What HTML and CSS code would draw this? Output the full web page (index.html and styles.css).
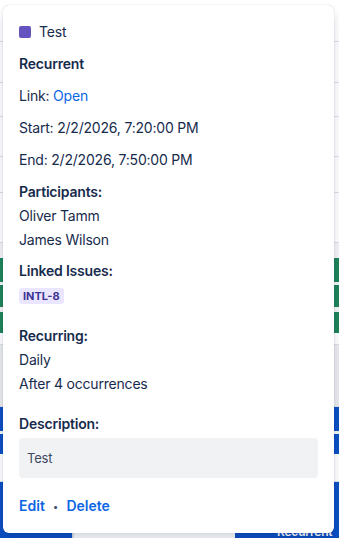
FILE: index.html
```html
<!DOCTYPE html>
<html lang="en">
<head>
  <meta charset="UTF-8">
  <meta name="viewport" content="width=device-width, initial-scale=1.0">
  <title>Event details</title>
  <link rel="stylesheet" href="styles.css">
</head>
<body>
  <div class="calendar">
    <div class="cal-row" style="height: 42px"></div>
    <div class="cal-row" style="height: 41px"></div>
    <div class="cal-row" style="height: 34px"></div>
    <div class="cal-row" style="height: 40px"></div>
    <div class="cal-row" style="height: 36px"></div>
    <div class="cal-row" style="height: 50px"></div>
    <div class="cal-gap" style="height: 15px"></div>
    <div class="cal-event green" style="height: 24px"></div>
    <div class="cal-gap" style="height: 3px"></div>
    <div class="cal-event green" style="height: 22px"></div>
    <div class="cal-gap" style="height: 5px"></div>
    <div class="cal-event green" style="height: 21px"></div>
    <div class="cal-row" style="height: 12px"></div>
    <div class="cal-row grey" style="height: 62px"></div>
    <div class="cal-event blue" style="height: 24px"></div>
    <div class="cal-gap" style="height: 3px"></div>
    <div class="cal-event blue" style="height: 20px"></div>
    <div class="cal-row" style="height: 28px"></div>
    <div class="cal-bottom">
      <div class="cal-cell blue"></div>
      <div class="cal-cell plain"></div>
      <div class="cal-cell blue wide">Recurrent</div>
    </div>
  </div>

  <div class="popup">
    <div class="row title">
      <span class="swatch"></span>
      <span>Test</span>
    </div>
    <div class="row strong">Recurrent</div>
    <div class="row">Link: <a href="#" class="link">Open</a></div>
    <div class="row">Start: 2/2/2026, 7:20:00 PM</div>
    <div class="row">End: 2/2/2026, 7:50:00 PM</div>

    <div class="section participants">
      <div class="label">Participants:</div>
      <div class="item">Oliver Tamm</div>
      <div class="item">James Wilson</div>
    </div>

    <div class="section linked">
      <div class="label">Linked Issues:</div>
      <div class="badges"><span class="badge">INTL-8</span></div>
    </div>

    <div class="section recurring">
      <div class="label">Recurring:</div>
      <div class="item">Daily</div>
      <div class="item">After 4 occurrences</div>
    </div>

    <div class="section description">
      <div class="label">Description:</div>
      <div class="desc-box">Test</div>
    </div>

    <div class="actions">
      <a href="#" class="link">Edit</a>
      <span class="dot">•</span>
      <a href="#" class="link">Delete</a>
    </div>
  </div>
</body>
</html>
```

FILE: styles.css
```css
body {
  margin: 0;
  width: 339px;
  height: 538px;
  overflow: hidden;
  position: relative;
  font-family: Inter, "Noto Sans", sans-serif;
  font-size: 14px;
  letter-spacing: -0.2px;
  color: #172b4d;
  background: #fff;
}

/* calendar behind the popup */
.calendar {
  display: flex;
  flex-direction: column;
  height: 538px;
}

.cal-row {
  border-bottom: 1px solid #dcdfe4;
  box-sizing: border-box;
  background: #fff;
}

.cal-row.grey {
  background: #ebecf0;
}

.cal-gap {
  background: #f4f5f7;
}

.cal-event.green {
  background: #1f845a;
}

.cal-event.blue {
  background: #0c4fc4;
}

.cal-bottom {
  flex: 1;
  display: flex;
  overflow: hidden;
}

.cal-cell {
  flex-shrink: 0;
}

.cal-cell.blue {
  background: #0c4fc4;
  width: 72px;
}

.cal-cell.plain {
  width: 161px;
  background: #fff;
  border-left: 2px solid #dcdfe4;
}

.cal-cell.wide {
  flex: 1;
  width: auto;
  min-width: 0;
  color: #fff;
  font-size: 12px;
  line-height: 12px;
  font-weight: 600;
  padding: 44px 0 0 42px;
  white-space: nowrap;
}

/* event popup */
.popup {
  position: absolute;
  top: 5px;
  left: 3px;
  width: 331px;
  height: 528px;
  box-sizing: border-box;
  padding: 17px 16px 16px;
  background: #fff;
  border-radius: 6px;
  box-shadow: 0 8px 12px rgba(9, 30, 66, 0.15), 0 0 1px rgba(9, 30, 66, 0.31);
  display: flex;
  flex-direction: column;
}

.row {
  line-height: 20px;
  margin-bottom: 12px;
}

.row:nth-child(5) {
  margin-bottom: 0;
}

.title {
  display: flex;
  align-items: center;
  gap: 8px;
}

.swatch {
  width: 12px;
  height: 12px;
  border-radius: 2px;
  background: #6554c0;
}

.strong,
.label {
  font-weight: 600;
}

.link {
  color: #0c66e4;
  text-decoration: none;
}

.section {
  display: flex;
  flex-direction: column;
  gap: 4px;
  line-height: 20px;
}

.participants {
  margin-top: 12px;
}

.participants .item:first-of-type {
  margin-top: 1px;
}

.linked {
  margin-top: 11px;
  gap: 7px;
}

.badges {
  display: flex;
  height: 16px;
}

.badge {
  background: #eae6ff;
  color: #403294;
  font-size: 11px;
  font-weight: 700;
  letter-spacing: 0;
  line-height: 16px;
  padding: 0 4px;
  border-radius: 3px;
}

.recurring {
  margin-top: 22px;
}

.description {
  margin-top: 20px;
}

.desc-box {
  background: #f1f2f4;
  border-radius: 4px;
  height: 40px;
  box-sizing: border-box;
  padding: 10px 8px;
  font-size: 13px;
  color: #3b4a63;
}

.actions {
  margin-top: 18px;
  line-height: 20px;
  display: flex;
  align-items: center;
  gap: 8px;
  font-weight: 600;
  letter-spacing: 0;
}

.dot {
  color: #44546f;
  font-size: 10px;
  font-weight: 400;
}
```
